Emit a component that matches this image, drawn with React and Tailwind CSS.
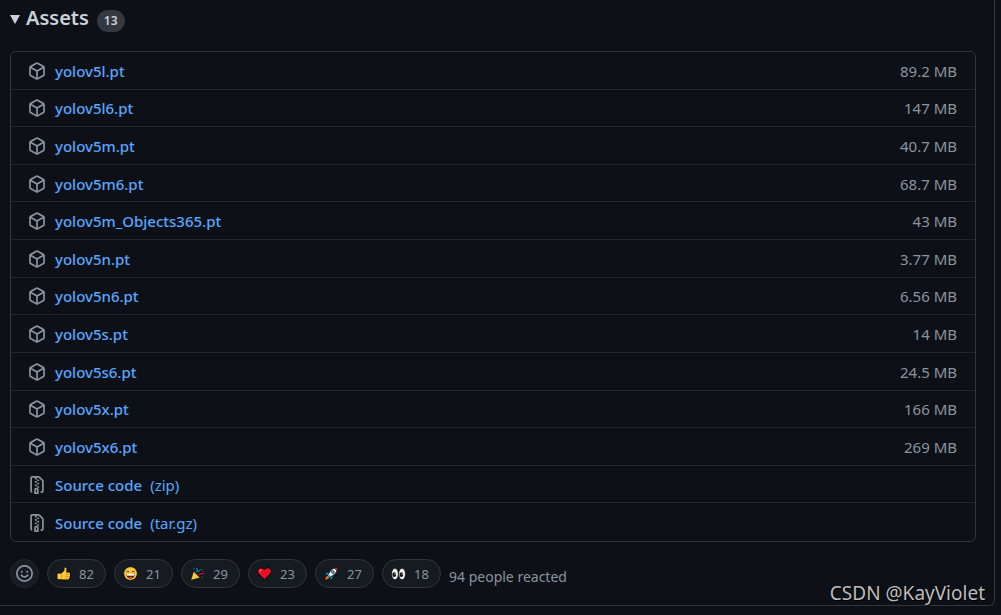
const ASSETS = [
  { name: 'yolov5l.pt', size: '89.2 MB' },
  { name: 'yolov5l6.pt', size: '147 MB' },
  { name: 'yolov5m.pt', size: '40.7 MB' },
  { name: 'yolov5m6.pt', size: '68.7 MB' },
  { name: 'yolov5m_Objects365.pt', size: '43 MB' },
  { name: 'yolov5n.pt', size: '3.77 MB' },
  { name: 'yolov5n6.pt', size: '6.56 MB' },
  { name: 'yolov5s.pt', size: '14 MB' },
  { name: 'yolov5s6.pt', size: '24.5 MB' },
  { name: 'yolov5x.pt', size: '166 MB' },
  { name: 'yolov5x6.pt', size: '269 MB' },
  { name: 'Source code', archive: '(zip)' },
  { name: 'Source code', archive: '(tar.gz)' },
]

function PackageIcon() {
  return (
    <svg className="w-[18px] h-[18px] shrink-0" viewBox="0 0 16 16" fill="currentColor" aria-hidden="true">
      <path d="m8.878.392 5.25 3.045c.54.314.872.89.872 1.514v6.098a1.75 1.75 0 0 1-.872 1.514l-5.25 3.045a1.75 1.75 0 0 1-1.756 0l-5.25-3.045A1.75 1.75 0 0 1 1 11.049V4.951c0-.624.332-1.201.872-1.514L7.122.392a1.75 1.75 0 0 1 1.756 0ZM7.875 1.69l-4.63 2.685L8 7.133l4.755-2.758-4.63-2.685a.248.248 0 0 0-.25 0ZM2.5 5.677v5.372c0 .09.047.171.125.216l4.625 2.683V8.432Zm6.25 8.271 4.625-2.683a.25.25 0 0 0 .125-.216V5.677L8.75 8.432Z" />
    </svg>
  )
}

function ZipIcon() {
  return (
    <svg className="w-[18px] h-[18px] shrink-0" viewBox="0 0 16 16" fill="currentColor" aria-hidden="true">
      <path d="M3.5 1.75v11.5c0 .09.048.173.126.217a.75.75 0 0 1-.752 1.298A1.748 1.748 0 0 1 2 13.25V1.75C2 .784 2.784 0 3.75 0h5.586c.464 0 .909.185 1.237.513l2.914 2.914c.329.328.513.773.513 1.237v8.586A1.75 1.75 0 0 1 12.25 15h-.5a.75.75 0 0 1 0-1.5h.5a.25.25 0 0 0 .25-.25V4.664a.25.25 0 0 0-.073-.177L9.513 1.573a.25.25 0 0 0-.177-.073H7.25a.75.75 0 0 1 0 1.5h-.5a.75.75 0 0 1 0-1.5h-3a.25.25 0 0 0-.25.25Zm3.75 8.75h.5c.966 0 1.75.784 1.75 1.75v3a.75.75 0 0 1-.75.75h-2.5a.75.75 0 0 1-.75-.75v-3c0-.966.784-1.75 1.75-1.75ZM6 5.25a.75.75 0 0 1 .75-.75h.5a.75.75 0 0 1 0 1.5h-.5A.75.75 0 0 1 6 5.25Zm.75 2.25h.5a.75.75 0 0 1 0 1.5h-.5a.75.75 0 0 1 0-1.5Zm1.25-.75A.75.75 0 0 1 8.75 6h.5a.75.75 0 0 1 0 1.5h-.5A.75.75 0 0 1 8 6.75ZM8.75 3h.5a.75.75 0 0 1 0 1.5h-.5a.75.75 0 0 1 0-1.5ZM8 9.75A.75.75 0 0 1 8.75 9h.5a.75.75 0 0 1 0 1.5h-.5A.75.75 0 0 1 8 9.75Zm-1 2.5v2.25h1v-2.25a.25.25 0 0 0-.25-.25h-.5a.25.25 0 0 0-.25.25Z" />
    </svg>
  )
}

function SmileyIcon() {
  return (
    <svg className="w-[17px] h-[17px]" viewBox="0 0 16 16" fill="none" stroke="currentColor" strokeWidth="1.6" strokeLinecap="round" aria-hidden="true">
      <circle cx="8" cy="8" r="7.2" />
      <path d="M5 9.6c1.6 2.2 4.4 2.2 6 0" />
      <circle cx="5.4" cy="6.4" r="1" fill="currentColor" stroke="none" />
      <circle cx="10.6" cy="6.4" r="1" fill="currentColor" stroke="none" />
    </svg>
  )
}

// Emoji drawings share a 16x16 grid
const EMOJI = {
  thumb: (
    <g>
      <path d="M1.5 8h4.200L9 4.800V1.600c1.700-.3 2.500.7 2.300 2.200L10.800 6.800h3c1.300 0 1.500 1.500.7 2 .8.500.7 1.700 0 2.100.5.600.3 1.600-.4 1.900.2.900-.3 1.700-1.200 1.700H6.500L5.500 14h-4z" fill="#ffc83d" stroke="#000" strokeWidth="1.600" strokeLinejoin="round" paintOrder="stroke" />
      <path d="M5.800 8.500v5M10 9h4M10 11h4M10 12.800h3.500" stroke="#d67d00" strokeWidth="0.6" fill="none" />
    </g>
  ),
  grin: (
    <g>
      <circle cx="8" cy="8" r="7.2" fill="#ffc83d" stroke="#000" strokeWidth="0.6" />
      <path d="M3.5 6.500q1.500-2 3 0M9.500 6.500q1.500-2 3 0" stroke="#222" strokeWidth="1" fill="none" />
      <path d="M3.5 8.500h9c0 3-2 5-4.500 5s-4.500-2-4.500-5z" fill="#40252c" />
      <path d="M4 8.500h8v1.800H4z" fill="#fff" />
      <path d="M5.500 12.300q2.500-1.600 5 0-2.500 2-5 0z" fill="#f03a17" />
    </g>
  ),
  party: (
    <g>
      <path d="M.8 15.200 3.800 5.500l7 7z" fill="#ffc83d" stroke="#000" strokeWidth="0.6" strokeLinejoin="round" />
      <path d="M6.500 6.500C8.500 5.500 8 3.500 6.800 2M9 7.500c.2-2 .8-3.700 3.200-4.200" stroke="#000" strokeWidth="3" fill="none" />
      <path d="M6.500 6.500C8.500 5.500 8 3.500 6.800 2" stroke="#0099bc" strokeWidth="1.400" fill="none" />
      <path d="M9 7.500c.2-2 .8-3.700 3.200-4.200" stroke="#0b7b9b" strokeWidth="1.200" fill="none" />
      <path d="M9 9.800c2-2 3.600-2.300 6.200-1.500" stroke="#000" strokeWidth="3.200" fill="none" />
      <path d="M9 9.800c2-2 3.600-2.300 6.200-1.500" stroke="#a4262c" strokeWidth="1.500" fill="none" />
      <path d="M3.700 2.500H5v1.300H3.700z" fill="#0078d7" />
      <path d="M13.300 5h1.400v1.300h-1.400z" fill="#e81224" />
      <path d="M12.500 11.500h1.300v1.200h-1.300z" fill="#107c10" />
    </g>
  ),
  heart: (
    <g>
      <path d="M8 14.500 1.800 8.200C-.3 5.500 1.200 2 4.300 2 6 2 7.200 2.800 8 4c.8-1.200 2-2 3.700-2 3.100 0 4.600 3.500 2.500 6.200z" fill="#e81224" stroke="#000" strokeWidth="0.8" />
      <path d="M3 6.300Q3 4.300 4.800 4" stroke="#ff8a8a" strokeWidth="1.200" fill="none" />
    </g>
  ),
  rocket: (
    <g stroke="#000" strokeWidth="0.6" strokeLinejoin="round">
      <path d="M1 15c0-3 1-4.500 2.800-5l2.300 2.300C5.500 14 4 15 1 15z" fill="#f7630c" />
      <path d="M5.500 6 2.200 7.200 1.200 10l3.300-.7zM10 10.500l-1.200 3.300L6 14.800l.7-3.300z" fill="#00a3d9" />
      <path d="M4 10.200C6 5.500 9.500 1.500 15 1c-.5 5.500-4.500 9-9.200 11z" fill="#f2f2f2" />
      <path d="M11 2.200 15 1l-1.200 4z" fill="#e81224" />
      <circle cx="9.500" cy="6.500" r="1.500" fill="#31d2f7" />
      <path d="m4 12 2-2" stroke="#0078d7" strokeWidth="1.200" />
    </g>
  ),
  eyes: (
    <g>
      <ellipse cx="4.200" cy="8.500" rx="3.500" ry="6" fill="#fff" stroke="#000" strokeWidth="0.6" />
      <ellipse cx="11.800" cy="8.500" rx="3.500" ry="6" fill="#fff" stroke="#000" strokeWidth="0.6" />
      <ellipse cx="3.500" cy="9.200" rx="2" ry="2.600" fill="#111" />
      <ellipse cx="11.100" cy="9.200" rx="2" ry="2.600" fill="#111" />
      <circle cx="4.200" cy="8.400" r="0.600" fill="#fff" />
      <circle cx="11.800" cy="8.400" r="0.600" fill="#fff" />
    </g>
  ),
}

const REACTIONS = [
  { emoji: 'thumb', count: 82 },
  { emoji: 'grin', count: 21 },
  { emoji: 'party', count: 29 },
  { emoji: 'heart', count: 23 },
  { emoji: 'rocket', count: 27 },
  { emoji: 'eyes', count: 18 },
]

function AssetRow({ asset }) {
  return (
    <li className="flex items-center gap-[9px] pl-[17px] pr-[18px] pt-px border-b border-[#21262d] last:border-b-0 text-[#8b949e]">
      {asset.archive ? <ZipIcon /> : <PackageIcon />}
      <a href="#" className="flex items-center gap-2 text-[#58a6ff] hover:underline">
        <span className="font-medium">{asset.name}</span>
        {asset.archive && <span>{asset.archive}</span>}
      </a>
      {asset.size && <span className="ml-auto">{asset.size}</span>}
    </li>
  )
}

function Reaction({ emoji, count }) {
  return (
    <button aria-label={`${emoji} ${count}`}
      className="flex items-center gap-2 h-[29px] w-[59px] pl-2 rounded-full border border-[#30363d] bg-[#161b22] text-[13px] text-[#8b949e]">
      <svg className="w-[15px] h-[15px] shrink-0" viewBox="0 0 16 16" aria-hidden="true">{EMOJI[emoji]}</svg>
      <span>{count}</span>
    </button>
  )
}

export default function App() {
  return (
    <div className='relative min-h-screen bg-[#0d1117] text-[15px] leading-5 font-["Segoe_UI","Noto_Sans",sans-serif]'>
      <div className="mr-1.5 pl-2.5 pr-[18px] pt-1.5 pb-[17px] border-r border-b border-[#30363d] rounded-br-md">
        <details open>
          <summary className="flex items-baseline list-none cursor-pointer text-[#c9d1d9]">
            <svg className="self-center w-[10px] h-[9px] mr-1.5" viewBox="0 0 10 9" fill="currentColor" aria-hidden="true">
              <path d="M0 0h10L5 9z" />
            </svg>
            <h3 className="text-[20px] leading-6 font-semibold">Assets</h3>
            <span className="ml-2 px-[7px] rounded-full bg-[#343941] text-[12px] leading-[22px] font-semibold">13</span>
          </summary>
          <ul className="mt-[19px] grid auto-rows-fr min-h-[491px] border border-[#30363d] rounded-md">
            {ASSETS.map((asset) => (
              <AssetRow key={asset.name + (asset.archive ?? '')} asset={asset} />
            ))}
          </ul>
        </details>

        <div className="mt-[17px] flex items-center gap-2">
          <button aria-label="Add reaction"
            className="flex items-center justify-center w-[29px] h-[29px] rounded-full border border-[#21262d] bg-[#161b22] text-[#8b949e]">
            <SmileyIcon />
          </button>
          {REACTIONS.map((r) => <Reaction key={r.emoji} {...r} />)}
          <span className="pt-1.5 text-[14px] text-[#8b949e]">94 people reacted</span>
        </div>
      </div>

      <span className='absolute right-4 bottom-2 text-[19px] leading-7 text-[#bdbdbd] [text-shadow:1px_1px_1px_#000] font-["Noto_Sans",sans-serif]'>
        CSDN @KayViolet
      </span>
    </div>
  )
}
